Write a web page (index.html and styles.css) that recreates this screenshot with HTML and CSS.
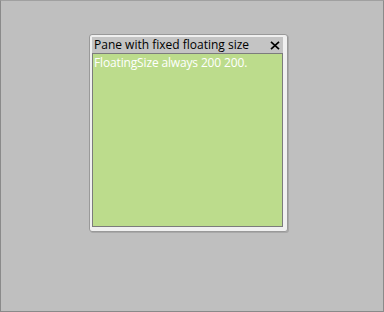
FILE: index.html
```html
<!DOCTYPE html>
<html>
<head>
<meta charset="utf-8">
<link rel="stylesheet" href="styles.css">
</head>
<body>
<div class="root">
  <div class="pane">
    <div class="titlebar">
      <span class="title">Pane with fixed floating size</span>
      <span class="close">
        <svg width="10" height="9" viewBox="0 0 10 9"><path d="M1 0.8 L9 8.2 M9 0.8 L1 8.2" stroke="#000" stroke-width="1.7" fill="none"/></svg>
      </span>
    </div>
    <div class="content">FloatingSize always 200 200.</div>
  </div>
</div>
</body>
</html>
```
FILE: styles.css
```css
html, body { margin: 0; padding: 0; }
body { width: 384px; height: 312px; overflow: hidden; font-family: "Open Sans", "DejaVu Sans", sans-serif; }
.root {
  width: 384px; height: 312px; box-sizing: border-box;
  background: #bfbfbf;
  border: 1px solid #8a8a8a;
  border-top-color: #a0a0a0;
  padding: 33px 0 0 88px;
}
.pane {
  width: 199px; height: 198px; box-sizing: border-box;
  border: 1px solid #999999;
  border-radius: 3px;
  background: #f0f0f0;
  padding: 2px 4px 4px 2px;
  display: flex; flex-direction: column;
  box-shadow: 1px 1px 0 #a8a8a8;
}
.titlebar {
  height: 16px;
  background: #c4c4c4;
  display: flex; align-items: center; justify-content: space-between;
  padding: 0 3px 0 2px;
  font-size: 12px; color: #000;
  line-height: 16px;
}
.close { display: flex; align-items: center; }
.content {
  flex: 1;
  background: #bcdc8c;
  border: 1px solid #7c7c7c;
  color: #fff;
  font-size: 12px;
  padding: 2px 1px;
  line-height: 14px;
  letter-spacing: -0.15px;
}
```
